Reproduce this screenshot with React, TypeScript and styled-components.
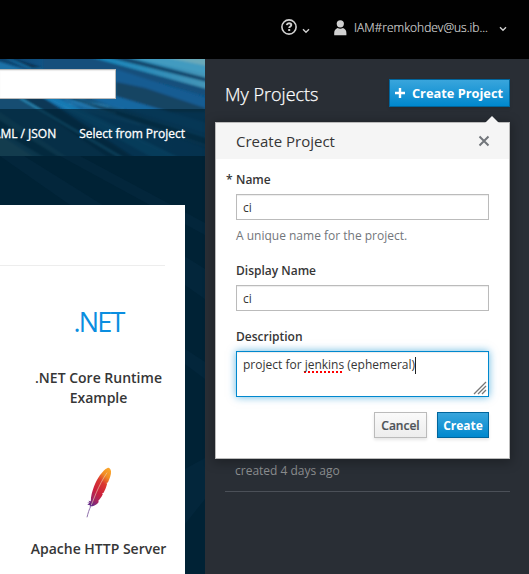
import React from 'react';
import styled, { createGlobalStyle, css } from 'styled-components';

const GlobalStyle = createGlobalStyle`
  *, *::before, *::after { box-sizing: border-box; }
  body {
    margin: 0;
    overflow: hidden;
    background: #292e35;
    font-family: "Open Sans", "Liberation Sans", sans-serif;
    font-size: 12px;
    line-height: 20px;
    color: #363636;
  }
`;

const Page = styled.div`
  display: flex;
  flex-direction: column;
  width: 529px;
  height: 574px;
  overflow: hidden;
`;

const Masthead = styled.header`
  display: flex;
  justify-content: flex-end;
  flex: 0 0 59px;
  padding: 17px 20px 0 0;
  background: #010101;
  color: #d1d1d1;
`;

const HelpMenu = styled.div`
  display: flex;
  width: 52px;
  height: 22px;
  padding-top: 2px;
`;

const UserMenu = styled.div`
  display: flex;
  width: 176px;
  height: 22px;
`;

const UserName = styled.span`
  width: 145px;
  margin-left: 7px;
  font-weight: 300;
  line-height: 21px;
  white-space: nowrap;
  -webkit-text-stroke: 0.2px #d1d1d1;
`;

const Caret = styled.svg<{ $top: number; $left?: number }>`
  flex: none;
  width: 8px;
  height: 6px;
  margin: ${p => p.$top}px 0 0 ${p => p.$left ?? 0}px;
`;

const Body = styled.div`
  display: flex;
  flex: 1;
  min-height: 0;
`;

const Catalog = styled.main`
  position: relative;
  display: flex;
  flex-direction: column;
  width: 205px;
  background: #002235;
`;

const Streaks = styled.svg`
  position: absolute;
  inset: 0;
  width: 205px;
  height: 515px;
`;

const SearchArea = styled.div`
  position: relative;
  height: 50px;
  padding-top: 10px;
`;

const SearchBox = styled.div`
  width: 116px;
  height: 30px;
  border: 1px solid #bbb;
  border-left: 0;
  background: #fff;
  box-shadow: inset 0 1px 1px rgba(0, 0, 0, 0.08);
`;

const LinkBar = styled.nav`
  position: relative;
  display: flex;
  justify-content: flex-end;
  gap: 23px;
  height: 47px;
  padding: 15px 20px 0 0;
  background: rgba(0, 34, 53, 0.7);
  color: #fff;
  white-space: nowrap;
`;

const NavLink = styled.span`
  -webkit-text-stroke: 0.3px #fff;
`;

const Backdrop = styled.div`
  position: relative;
  flex: 1;
  padding-top: 49px;
`;

const CatalogCard = styled.section`
  width: 185px;
  height: 369px;
  padding-top: 60px;
  background: #fff;
`;

const Divider = styled.div`
  width: 165px;
  height: 1px;
  background: #ededed;
`;

const Tile = styled.article<{ $top: number; $gap: number }>`
  display: flex;
  flex-direction: column;
  align-items: center;
  gap: ${p => p.$gap}px;
  width: 157px;
  margin-left: 20px;
  padding-top: ${p => p.$top}px;
`;

const DotNet = styled.div`
  height: 30px;
  color: #0a8ee0;
  font-size: 27px;
  font-weight: 400;
  line-height: 30px;
  letter-spacing: -1.8px;
`;

const TileTitle = styled.h3`
  margin: 0;
  font-size: 14px;
  font-weight: 600;
  line-height: 20px;
  text-align: center;
  white-space: nowrap;
`;

const Sidebar = styled.aside`
  position: relative;
  width: 324px;
  background: #292e35;
`;

const SidebarHeader = styled.div`
  display: flex;
  justify-content: space-between;
  height: 363px;
  padding: 20px 19px 0 20px;
`;

const SidebarTitle = styled.h2`
  margin: 0;
  color: #fff;
  font-size: 18px;
  font-weight: 300;
  line-height: 31px;
  -webkit-text-stroke: 0.25px #fff;
`;

const Button = styled.button<{ $primary?: boolean; $large?: boolean; $width: number }>`
  display: flex;
  align-items: center;
  justify-content: center;
  width: ${p => p.$width}px;
  height: ${p => (p.$large ? 28 : 26)}px;
  padding: ${p => (p.$large ? '0 1px 0 0' : '0')};
  gap: 7px;
  font-family: inherit;
  font-size: ${p => (p.$large ? 12.8 : 12)}px;
  font-weight: ${p => (p.$primary ? 700 : 600)};
  white-space: nowrap;
  box-shadow: 0 2px 3px rgba(3, 3, 3, 0.1);
  ${p =>
    p.$primary
      ? css`
          border: 1px solid #00659c;
          color: #fff;
          background: linear-gradient(#39a5dc, #0088ce);
        `
      : css`
          border: 1px solid #bbb;
          color: #4d5258;
          background: linear-gradient(#fafafa, #ededed);
          -webkit-text-stroke: 0.2px #4d5258;
        `}
`;

const ProjectSummary = styled.div`
  height: 70px;
  margin: 0 19px 0 20px;
  padding: 39px 0 0 10px;
  border-bottom: 1px solid #4b5058;
  color: #8b8d8f;
`;

const Popover = styled.section`
  position: absolute;
  top: 63px;
  left: 10px;
  width: 295px;
  height: 337px;
  border: 1px solid #bbb;
  background: #fff;
  box-shadow: 0 2px 10px 2px rgba(3, 3, 3, 0.26);
`;

const Arrow = styled.svg`
  position: absolute;
  top: -8px;
  right: 9px;
  width: 16px;
  height: 9px;
`;

const PopoverHeader = styled.header`
  display: flex;
  justify-content: space-between;
  height: 36px;
  padding: 8px 19px 0 20px;
  background: #f5f5f5;
`;

const PopoverTitle = styled.h3`
  margin: 0;
  font-size: 15px;
  font-weight: 400;
  line-height: 21px;
`;

const CloseIcon = styled.svg`
  width: 12px;
  height: 12px;
  margin-top: 4px;
`;

const Form = styled.div`
  display: flex;
  flex-direction: column;
  padding: 11px 20px 0;
`;

const Label = styled.label<{ $required?: boolean; $top?: number }>`
  margin: ${p => p.$top ?? 0}px 0 4px ${p => (p.$required ? -10 : 0)}px;
  font-weight: 600;
  line-height: 20px;
`;

const Asterisk = styled.span`
  display: inline-block;
  width: 10px;
`;

const Field = styled.div`
  height: 26px;
  padding: 2px 6px;
  border: 1px solid #bbb;
  box-shadow: inset 0 1px 1px rgba(3, 3, 3, 0.075);
  line-height: 22px;
`;

const TextArea = styled(Field)`
  position: relative;
  height: 46px;
  border-color: #0088ce;
  box-shadow: inset 0 1px 1px rgba(3, 3, 3, 0.075), 0 0 8px rgba(0, 136, 206, 0.6);
  white-space: nowrap;
`;

const Misspelled = styled.span`
  text-decoration: underline dotted #f00 2px;
  text-underline-offset: 2px;
  text-decoration-skip-ink: none;
`;

const TextCursor = styled.span`
  display: inline-block;
  width: 1px;
  height: 17px;
  background: #222;
  vertical-align: -5px;
`;

const ResizeGrip = styled.svg`
  position: absolute;
  right: 1px;
  bottom: 1px;
  width: 14px;
  height: 14px;
`;

const Hint = styled.div`
  margin-top: 6px;
  color: #72767b;
`;

const Actions = styled.footer`
  display: flex;
  justify-content: flex-end;
  gap: 10px;
  margin-top: 15px;
`;

function ChevronDown({ top, left }: { top: number; left?: number }) {
  return (
    <Caret $top={top} $left={left} viewBox="0 0 8 6">
      <path d="M1 1.2 4 4.2 7 1.2" fill="none" stroke="#d1d1d1" strokeWidth="1.4" />
    </Caret>
  );
}

function HelpIcon() {
  return (
    <svg width="16" height="16" viewBox="0 0 16 16" fill="none" stroke="#d1d1d1">
      <circle cx="8" cy="8" r="7.1" strokeWidth="1.6" />
      <path d="M5.7 6.1C6 4.8 6.8 4.3 8 4.3c1.4 0 2.3.7 2.3 1.8 0 1.5-2.1 1.5-2.1 3" strokeWidth="1.9" />
      <path d="M7.2 11h2" strokeWidth="1.9" />
    </svg>
  );
}

function UserIcon() {
  return (
    <svg width="14" height="22" viewBox="-.5 -2.8 14 22" fill="#d1d1d1">
      <circle cx="6.8" cy="4" r="3.6" />
      <path d="M.7 15.4v-2.2C.7 10.4 2.3 9 4.1 8.3c1.6 1 3.8 1 5.4 0 1.9.7 3.4 2.1 3.4 4.9v2.2z" />
    </svg>
  );
}

function HeroStreaks() {
  return (
    <Streaks viewBox="0 0 205 515" preserveAspectRatio="none">
      <defs>
        <linearGradient id="hero" x1="0" y1="0" x2="1" y2="0">
          <stop offset="0" stopColor="#0d4069" />
          <stop offset=".35" stopColor="#136098" />
          <stop offset="1" stopColor="#12578a" />
        </linearGradient>
        <linearGradient id="light" x1="0" y1="0" x2="1" y2="0">
          <stop offset="0" stopColor="#1583ba" />
          <stop offset="1" stopColor="#4595b7" />
        </linearGradient>
        <filter id="soft"><feGaussianBlur stdDeviation=".8" /></filter>
      </defs>
      <rect width="205" height="97" fill="url(#hero)" />
      <g filter="url(#soft)">
        <path d="M43 -2H88L207 29V37L116 12H43z" fill="#124f7b" />
        <path d="M116 10 205 39V49L116 23z" fill="#145b92" />
        <path d="M116 23 145 29 205 49V53H170L116 37z" fill="#124464" />
        <path d="M90 -2H207V30z" fill="url(#light)" />
        <path d="M106 -2H124L207 19V23z" fill="#13496e" />
        <path d="M127 -2H207V15z" fill="#439bc0" />
        <path d="M163 -2H207V7z" fill="#69a9b9" />
        <path d="M-2 2 30 12H-2zM2 -2 44 10H30z" fill="#1b71a7" />
        <path d="M7 -2 43 9H32z" fill="#092d4b" />
        <path d="M-2 38H22L115 99H-2z" fill="#164e72" />
        <path d="M20 38H42L135 99H109z" fill="#0b3856" />
        <path d="M42 38H56L180 99H153z" fill="#1979b2" />
        <path d="M53 38H118L207 64V75L116 47z" fill="#1768a1" />
        <path d="M68 39H88L207 79V89z" fill="#114061" />
        <path d="M-2 52 68 99H-2z" fill="#276581" />
        <path d="M-2 60 61 99H45L-2 71z" fill="#113b54" />
        <path d="M-2 75 35 99H-2z" fill="#43798b" />
        <path d="M20 39 122 99" stroke="#2c8dbb" strokeWidth="2" />
        <path d="M44 38 177 99M76 39 124 50M72 42 207 87M79 39 207 78" stroke="#2684bd" strokeWidth="1.2" fill="none" opacity=".75" />
        <path d="M65 41 109 48M68 44 116 54M83 50 140 66" stroke="#3c9bcc" strokeWidth="1" fill="none" opacity=".6" />
      </g>
      <rect y="97" width="205" height="418" fill="#002235" />
      <path d="M0 97H24L205 210V240zM60 97H80L205 164V176zM185 290 205 303V320L185 305zM185 410 205 399V440L185 465z" fill="#0b3550" opacity=".25" />
    </Streaks>
  );
}

function ApacheFeather() {
  return (
    <svg width="28" height="52" viewBox="0 0 28 52">
      <defs>
        <linearGradient id="feather" x1=".8" y1="0" x2=".25" y2="1">
          <stop offset="0" stopColor="#f9a32a" />
          <stop offset=".17" stopColor="#f28b23" />
          <stop offset=".36" stopColor="#db3931" />
          <stop offset=".65" stopColor="#c91f3d" />
          <stop offset=".85" stopColor="#a32663" />
          <stop offset="1" stopColor="#662b87" />
        </linearGradient>
      </defs>
      <path d="M22.5 1C24 .3 25.6 1.7 26 4.3c.4 3-1.3 7-3.1 11.3l-1.7.5 1 .5c-1 4-2.3 6.7-3.6 9.2l-1.7.6 1 .6c-1.4 3.1-3.1 5.2-5 7.3l1.1.3c-1.5 2.6-3.6 3.9-6.5 4.7l-3.3 0 1-1.4-3 .2 2-1.5-2-.8 2.7-.3-1.5-1.8 2.4.5C5.8 29 7.2 24.5 9 19.5 11.8 12.3 17.5 3.1 22.5 1z" fill="url(#feather)" />
      <path d="M22.1 5.6C17.6 12.1 14.2 19 11.2 25.9L6.3 38" fill="none" stroke="#ead0b2" strokeWidth=".8" opacity=".8" />
      <path d="M6.1 38.5C4.1 42.5 3 46.2 2 50.3" fill="none" stroke="#8261a2" strokeWidth=".9" />
    </svg>
  );
}

export default function App() {
  return (
    <Page>
      <GlobalStyle />
      <Masthead>
        <HelpMenu>
          <HelpIcon />
          <ChevronDown top={9} left={5} />
        </HelpMenu>
        <UserMenu>
          <UserIcon />
          <UserName>IAM#remkohdev@us.ib...</UserName>
          <ChevronDown top={9} />
        </UserMenu>
      </Masthead>
      <Body>
        <Catalog>
          <HeroStreaks />
          <SearchArea><SearchBox /></SearchArea>
          <LinkBar>
            <NavLink>YAML / JSON</NavLink>
            <NavLink>Select from Project</NavLink>
          </LinkBar>
          <Backdrop>
            <CatalogCard>
              <Divider />
              <Tile $top={41} $gap={31}>
                <DotNet>.NET</DotNet>
                <TileTitle>.NET Core Runtime<br />Example</TileTitle>
              </Tile>
              <Tile $top={59} $gap={20}>
                <ApacheFeather />
                <TileTitle>Apache HTTP Server</TileTitle>
              </Tile>
            </CatalogCard>
          </Backdrop>
        </Catalog>
        <Sidebar>
          <SidebarHeader>
            <SidebarTitle>My Projects</SidebarTitle>
            <Button $primary $large $width={121}>
              <svg width="10" height="10" viewBox="0 0 10 10"><path d="M5 0v10M0 5h10" stroke="#fff" strokeWidth="2.4" /></svg>
              Create Project
            </Button>
          </SidebarHeader>
          <ProjectSummary>created 4 days ago</ProjectSummary>
          <Popover>
            <Arrow viewBox="0 0 16 9"><path d="M0 9 8 1l8 8z" fill="#f5f5f5" /></Arrow>
            <PopoverHeader>
              <PopoverTitle>Create Project</PopoverTitle>
              <CloseIcon viewBox="0 0 12 12"><path d="m1.5 1.5 9 9M10.5 1.5l-9 9" stroke="#72767b" strokeWidth="2" /></CloseIcon>
            </PopoverHeader>
            <Form>
              <Label $required><Asterisk>*</Asterisk>Name</Label>
              <Field>ci</Field>
              <Hint>A unique name for the project.</Hint>
              <Label $top={15}>Display Name</Label>
              <Field>ci</Field>
              <Label $top={16}>Description</Label>
              <TextArea>
                project for <Misspelled>jenkins</Misspelled> (ephemeral)<TextCursor />
                <ResizeGrip viewBox="0 0 14 14">
                  <path d="M1 13 13 1M5 13l8-8M9 13l4-4" stroke="#777" strokeWidth="1.3" />
                </ResizeGrip>
              </TextArea>
              <Actions>
                <Button $width={53}>Cancel</Button>
                <Button $primary $width={52}>Create</Button>
              </Actions>
            </Form>
          </Popover>
        </Sidebar>
      </Body>
    </Page>
  );
}
